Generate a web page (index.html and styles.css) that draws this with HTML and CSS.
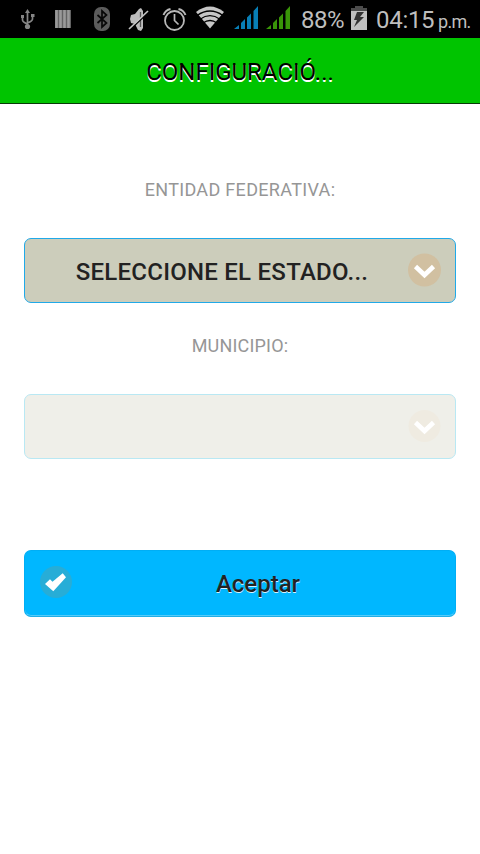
FILE: index.html
```html
<!DOCTYPE html>
<html lang="es">
<head>
<meta charset="utf-8">
<title>Configuración</title>
<link rel="stylesheet" href="styles.css">
</head>
<body>
<div class="status">
  <svg class="usb" width="16" height="22" viewBox="0 0 16 22" fill="none" stroke="#858585" stroke-width="1.7"><path d="M7.5 3v14M2.500 8v3q0 2 5 4M12.500 7v3q0 2-5 4"/><path d="M7.500 0l2.500 4H5z" fill="#858585" stroke="none"/><circle cx="7.500" cy="17.500" r="2.600" fill="#858585" stroke="none"/><path d="M1 6h3v3H1zM11 5h3.500v3H11z" fill="#858585" stroke="none"/></svg>
  <svg class="bars" width="16" height="18" viewBox="0 0 16 18"><path fill="#626262" d="M0 0h16v18H0z"/><path d="M1.500 0v18M5.500 0v18M9.500 0v18M13.500 0v18" stroke="#999" stroke-width="2.600"/></svg>
  <svg class="bt" width="16" height="24" viewBox="0 0 16 24"><rect width="16" height="24" rx="7" fill="#5c5c5c"/><path d="M3.500 8l9 8-4.500 4V4l4.500 4-9 8" fill="none" stroke="#080808" stroke-width="1.700"/></svg>
  <svg class="mute" width="21" height="24" viewBox="0 0 21 24"><path d="M3 7l4-1 4-5 2-1 2 3v17l-2 3-3-1-3-6-4-1-1-4z" fill="#bcbcbc"/><path d="M12.500 4v15" stroke="#555" stroke-width="1.300"/><path d="M1.800 22L20.800 4" stroke="#000" stroke-width="1.500"/><path d="M1 21L20 3" stroke="#c4c4c4" stroke-width="1.700"/></svg>
  <svg class="alarm" width="25" height="24" viewBox="0 0 25 24" fill="none" stroke="#b8b8b8"><circle cx="12.500" cy="13.500" r="9.500" stroke-width="1.800"/><path d="M12.500 7v6.500l4 4" stroke-width="1.700"/><path d="M1.500 8q2-5 7-6M16.500 2q5 1 7 6" stroke-width="2"/></svg>
  <svg class="wifi" width="30" height="24" viewBox="0 0 30 24"><path d="M1 6Q15-5 29 6L15 22.500z" fill="#c6c6c6"/><path d="M2 9.500q13-9 26 0M5 13.200q10-7 20 0M8 17q7-5 14 0" fill="none" stroke="#000" stroke-width="1.300"/></svg>
  <svg class="signal-a" width="24" height="24" viewBox="0 0 24 24" fill="#087fb6"><path d="M0 23l5-4v4zM7 17l4-4v10H7zM13 11.500l4-4V23h-4zM19.500 5L24 0v23h-4.500z"/></svg>
  <svg class="signal-b" width="24" height="24" viewBox="0 0 24 24" fill="#399508"><path d="M0 23l5-4v4zM7 17l4-4v10H7zM13 11.500l4-4V23h-4zM19.500 5L24 0v23h-4.500z"/></svg>
  <span class="percent">88%</span>
  <svg class="battery" width="16" height="24" viewBox="0 0 16 24"><path d="M4 0h8v2h4v5H0V2h4z" fill="#4c4c4c"/><path d="M0 5h16v19H0z" fill="#c0c0c0"/><path d="M6 6h7l-4 5h4L3 21l3-7H3z" fill="#333"/></svg>
  <span class="clock">04:15</span><span class="period">p.m.</span>
</div>
<header class="header"><h1>CONFIGURACIÓ...</h1></header>
<main>
  <label class="label state-label" for="state">ENTIDAD FEDERATIVA:</label>
  <button class="select" id="state" type="button">
    <span class="select-text">SELECCIONE EL ESTADO...</span>
    <svg class="arrow" width="34" height="34" viewBox="0 0 34 34"><circle cx="17.500" cy="17" r="16.500" fill="#d1c0a1"/><path d="M8.500 13.500l9 8.500 9-8.500" fill="none" stroke="#fff" stroke-width="4.600"/></svg>
  </button>
  <label class="label town-label" for="town">MUNICIPIO:</label>
  <button class="select disabled" id="town" type="button" disabled>
    <span class="select-text"></span>
    <svg class="arrow" width="34" height="34" viewBox="0 0 34 34"><circle cx="17.500" cy="17" r="16" fill="#efebe1"/><path d="M8.500 13.500l9 8.500 9-8.500" fill="none" stroke="#fff" stroke-width="4.600"/></svg>
  </button>
  <button class="accept" type="button">
    <svg class="check" width="34" height="34" viewBox="0 0 34 34"><circle cx="17" cy="17" r="16" fill="#27add7"/><path d="M6 19l5-4.700 2.500 2.400L23.700 8.300l3.300 4L14.300 26.300z" fill="#fff"/></svg>
    <span class="accept-text">Aceptar</span>
  </button>
</main>
</body>
</html>
```
FILE: styles.css
```css
* { box-sizing: border-box; }
body { margin: 0; min-height: 854px; background: #fff; font-family: Roboto, sans-serif; }
svg { display: block; flex: none; }
.status { height: 38px; display: flex; align-items: flex-start; background: #000; color: #bebebe; white-space: nowrap; }
.usb { margin: 9px 0 0 20px; }
.bars { margin: 10px 0 0 19px; }
.bt { margin: 7px 0 0 23px; }
.mute { margin: 8px 0 0 18px; }
.alarm { margin: 7px 0 0 13px; }
.wifi { margin: 6px 0 0 8px; }
.signal-a { margin: 6px 0 0 9px; }
.signal-b { margin: 6px 0 0 8px; }
.percent { width: 50px; padding-left: 11px; margin-top: 5px; font-size: 24px; line-height: 30px; letter-spacing: -.5px; }
.battery { margin: 6px 0 0 11px; }
.clock { width: 71px; padding-left: 9px; margin-top: 5px; font-size: 24px; line-height: 30px; letter-spacing: -.3px; }
.period { margin-top: 9px; font-size: 18px; line-height: 26px; letter-spacing: -.7px; }
.header { height: 66px; background: #00c400; border-bottom: 1px solid #073b07; text-align: center; }
.header h1 { margin: 0; font-size: 24px; line-height: 69px; height: 65px; font-weight: 400; color: #000; text-shadow: 0 1.500px 0 #fff; }
main { display: flex; flex-direction: column; padding: 0 24px; }
.label { height: 24px; line-height: 24px; font-size: 18px; text-align: center; color: #969696; }
.state-label { margin: 74px 0 36px; letter-spacing: .32px; }
.town-label { margin: 31px 0 36px; letter-spacing: .2px; }
.select { display: flex; align-items: center; height: 65px; width: 432px; padding: 0 14px 1px 0; border: 1px solid #20a9e8; border-radius: 7px; background: #cccdbb; font-family: inherit; }
.select-text { flex: 1; padding: 3px 0 0 12px; font-size: 24px; line-height: 32px; font-weight: 500; letter-spacing: .25px; color: #222; text-align: center; }
.disabled { background: #efefe9; border-color: #b9e8f3; }
.accept { display: flex; align-items: center; width: 432px; height: 67px; margin-top: 91px; padding: 0; border: 1px solid #00aef5; border-bottom-color: #20aee6; border-radius: 7px; background: #00b7ff; box-shadow: inset 0 -1px #55cbfa; font-family: inherit; }
.check { margin: 0 0 3px 14px; }
.accept-text { flex: 1; padding-right: 12px; font-size: 24px; line-height: 32px; font-weight: 500; color: #222; text-shadow: 0 1px 0 #d4f2ff; text-align: center; }
```
